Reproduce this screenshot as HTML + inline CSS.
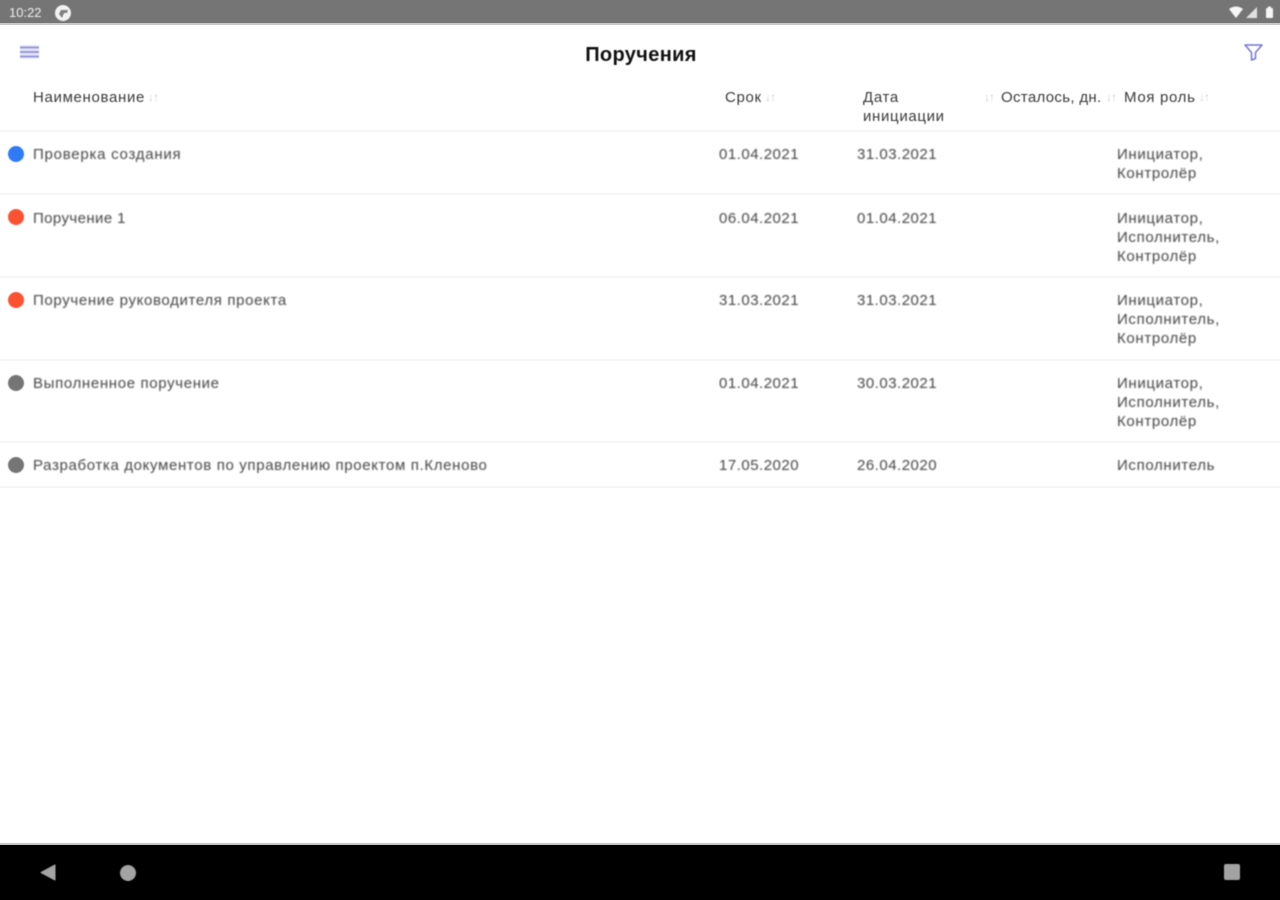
<!DOCTYPE html>
<html lang="ru">
<head>
<meta charset="utf-8">
<title>Поручения</title>
<style>
html,body{margin:0;padding:0;width:1280px;height:900px;overflow:hidden;background:#fff;font-family:"Liberation Sans",sans-serif}
.a{position:absolute;white-space:nowrap}
.t{font-size:15px;line-height:19px;letter-spacing:.65px;color:#444;filter:blur(.7px)}
.n{letter-spacing:.5px}
.h{font-size:15px;line-height:19px;letter-spacing:.67px;color:#3a3a3a;filter:blur(.6px)}
.s{font-size:12px;line-height:12px;font-weight:bold;color:#cfcfcf;filter:blur(.6px);letter-spacing:-1px}
.d{position:absolute;left:8px;width:16px;height:16px;border-radius:50%;filter:blur(.4px)}
.l{position:absolute;left:0;width:1280px;height:2px;background:#f6f6f6}
</style>
</head>
<body>
<div class="a" style="left:0;top:0;width:1280px;height:23px;background:#757575"></div>
<div class="a" style="left:0;top:23px;width:1280px;height:2px;background:#c8c8c8"></div>
<div class="a" style="left:9px;top:5px;font-size:13px;line-height:15px;color:#eee;filter:blur(.5px)">10:22</div>
<svg class="a" style="left:54px;top:4px;filter:blur(.4px)" width="18" height="18" viewBox="0 0 18 18"><circle cx="9" cy="9" r="8" fill="#f2f2f2"/><path d="M7 6h7l-1 3h-3l-2 5-3-4z" fill="#808080"/></svg>
<svg class="a" style="left:1228px;top:5px;filter:blur(.4px)" width="46" height="15" viewBox="0 0 46 15"><path d="M1 4Q8-1 15 4L8 13z" fill="#f5f5f5"/><path d="M29 2V13H18z" fill="#e0e0e0"/><rect x="38" y="3" width="7" height="10" rx="1" fill="#f5f5f5"/><rect x="40" y="1.500" width="3" height="2" fill="#f5f5f5"/></svg>

<svg class="a" style="left:20px;top:45px;filter:blur(.4px)" width="19" height="14" viewBox="0 0 19 14"><rect width="19" height="14" fill="#e6e6f8"/><path d="M0 2.500H19M0 7H19M0 11.500H19" stroke="#8f8fd8" stroke-width="1.800"/></svg>
<div class="a" style="left:1px;top:44px;width:1280px;text-align:center;font-size:20px;line-height:22px;letter-spacing:.35px;font-weight:bold;color:#111;filter:blur(.5px)">Поручения</div>
<svg class="a" style="left:1243px;top:43px;filter:blur(.4px)" width="21" height="19" viewBox="0 0 21 19"><path d="M2 2H19L12.500 9.500V15.500L8.500 17V9.500Z" fill="none" stroke="#7474dd" stroke-width="1.500" stroke-linejoin="round"/></svg>

<div class="a h" style="left:33px;top:88px">Наименование</div><div class="a s" style="left:148px;top:91px">↓↑</div>
<div class="a h" style="left:725px;top:88px">Срок</div><div class="a s" style="left:765px;top:91px">↓↑</div>
<div class="a h" style="left:863px;top:88px">Дата</div>
<div class="a h" style="left:863px;top:107px">инициации</div>
<div class="a s" style="left:984px;top:91px">↓↑</div>
<div class="a h" style="left:1001px;top:88px;letter-spacing:.32px">Осталось, дн.</div>
<div class="a s" style="left:1106px;top:91px">↓↑</div>
<div class="a h" style="left:1124px;top:88px">Моя роль</div>
<div class="a s" style="left:1199px;top:91px">↓↑</div>
<div class="l" style="top:130px"></div>

<div class="d" style="top:146px;background:#2f7bf6"></div>
<div class="a t" style="left:33px;top:145px;letter-spacing:.75px">Проверка создания</div>
<div class="a t n" style="left:719px;top:145px">01.04.2021</div>
<div class="a t n" style="left:857px;top:145px">31.03.2021</div>
<div class="a t" style="left:1117px;top:145px">Инициатор,<br>Контролёр</div>
<div class="l" style="top:193px"></div>

<div class="d" style="top:209px;background:#fb5232"></div>
<div class="a t" style="left:33px;top:209px;letter-spacing:.4px">Поручение 1</div>
<div class="a t n" style="left:719px;top:209px">06.04.2021</div>
<div class="a t n" style="left:857px;top:209px">01.04.2021</div>
<div class="a t" style="left:1117px;top:209px">Инициатор,<br>Исполнитель,<br>Контролёр</div>
<div class="l" style="top:276px"></div>

<div class="d" style="top:292px;background:#fb5232"></div>
<div class="a t" style="left:33px;top:291px">Поручение руководителя проекта</div>
<div class="a t n" style="left:719px;top:291px">31.03.2021</div>
<div class="a t n" style="left:857px;top:291px">31.03.2021</div>
<div class="a t" style="left:1117px;top:291px">Инициатор,<br>Исполнитель,<br>Контролёр</div>
<div class="l" style="top:359px"></div>

<div class="d" style="top:375px;background:#757575"></div>
<div class="a t" style="left:33px;top:374px">Выполненное поручение</div>
<div class="a t n" style="left:719px;top:374px">01.04.2021</div>
<div class="a t n" style="left:857px;top:374px">30.03.2021</div>
<div class="a t" style="left:1117px;top:374px">Инициатор,<br>Исполнитель,<br>Контролёр</div>
<div class="l" style="top:441px"></div>

<div class="d" style="top:457px;background:#757575"></div>
<div class="a t" style="left:33px;top:456px">Разработка документов по управлению проектом п.Кленово</div>
<div class="a t n" style="left:719px;top:456px">17.05.2020</div>
<div class="a t n" style="left:857px;top:456px">26.04.2020</div>
<div class="a t" style="left:1117px;top:456px">Исполнитель</div>
<div class="l" style="top:486px"></div>

<div class="a" style="left:0;top:843px;width:1280px;height:2px;background:#c4c4c4"></div>
<div class="a" style="left:0;top:845px;width:1280px;height:55px;background:#000"></div>
<svg class="a" style="left:38px;top:862px;filter:blur(.4px)" width="20" height="20" viewBox="0 0 20 20"><path d="M3 10.500 17 3V18Z" fill="#a3a3a3" stroke="#a3a3a3" stroke-linejoin="round"/></svg>
<div class="a" style="left:120px;top:865px;width:16px;height:16px;border-radius:50%;background:#a3a3a3;filter:blur(.4px)"></div>
<div class="a" style="left:1224px;top:864px;width:16px;height:16px;border-radius:2px;background:#a3a3a3;filter:blur(.4px)"></div>
</body>
</html>
